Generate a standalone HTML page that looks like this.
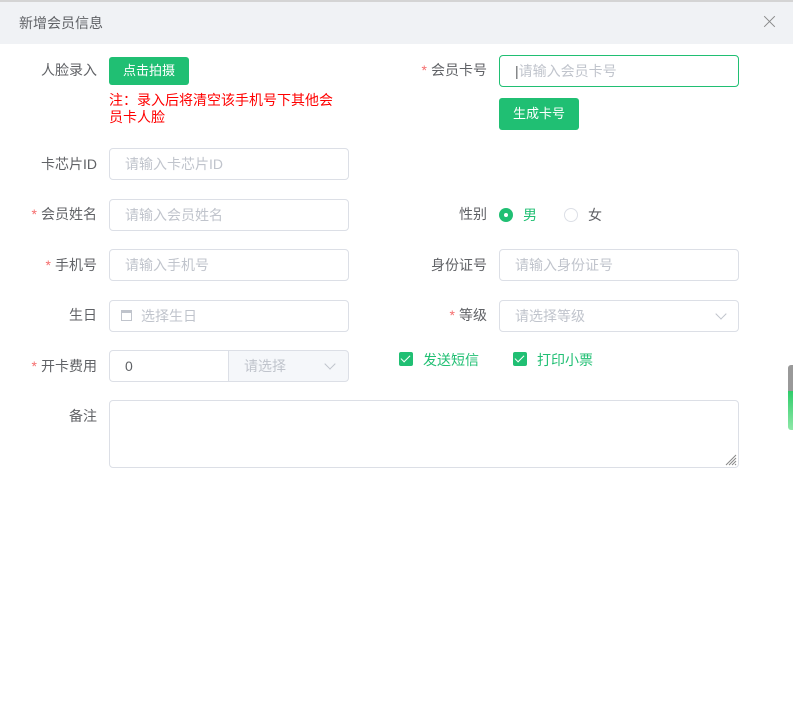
<!DOCTYPE html><html><head><meta charset="utf-8"><style>
*{box-sizing:border-box;margin:0;padding:0}
body{width:793px;height:722px;background:#fff;font-family:"Liberation Sans","Noto Sans CJK SC",sans-serif;font-size:14px;color:#606266;position:relative;overflow:hidden}
.a{position:absolute}
.hd{left:0;top:0;width:793px;height:44px;background:#f0f2f5;border-top:2px solid #d4d4d4}
.lb{position:absolute;text-align:right;width:120px;line-height:32px;color:#606266}
.lb i{color:#f56c6c;font-style:normal;margin-right:4px}
.in{position:absolute;height:32px;border:1px solid #dcdfe6;border-radius:4px;line-height:30px;padding-left:15px;color:#c0c4cc;font-size:14px}
.btn{position:absolute;background:#20bf73;color:#fff;border-radius:3px;text-align:center;font-size:13px}
.cb{position:absolute;width:14px;height:14px;background:#20bf73;border-radius:2px}
.cb:after{content:"";position:absolute;left:4px;top:1px;width:4px;height:8px;border:solid #fff;border-width:0 1.5px 1.5px 0;transform:rotate(45deg)}
.chev{position:absolute;width:8px;height:8px;border:solid #c0c4cc;border-width:0 1px 1px 0;transform:rotate(45deg)}
</style></head><body>
<div class="a hd"></div>
<div class="a" style="left:19px;top:13px;font-size:14px;color:#606266">新增会员信息</div>
<div class="a" style="left:762px;top:21px;width:15px;height:1px;background:#888;transform:rotate(45deg)"></div>
<div class="a" style="left:762px;top:21px;width:15px;height:1px;background:#888;transform:rotate(-45deg)"></div>

<div class="lb" style="left:-23px;top:54px">人脸录入</div>
<div class="btn" style="left:109px;top:57px;width:80px;height:28px;line-height:28px">点击拍摄</div>
<div class="a" style="left:109px;top:92px;color:#f00;font-size:14px;line-height:17px;width:230px">注：录入后将清空该手机号下其他会员卡人脸</div>

<div class="lb" style="left:367px;top:54px"><i>*</i>会员卡号</div>
<div class="in" style="left:499px;top:55px;width:240px;border-color:#20bf73"><span style="color:#606266;font-weight:100">|</span>请输入会员卡号</div>
<div class="btn" style="left:499px;top:98px;width:80px;height:32px;line-height:32px">生成卡号</div>

<div class="lb" style="left:-23px;top:148px">卡芯片ID</div>
<div class="in" style="left:109px;top:148px;width:240px">请输入卡芯片ID</div>

<div class="lb" style="left:-23px;top:198px"><i>*</i>会员姓名</div>
<div class="in" style="left:109px;top:199px;width:240px">请输入会员姓名</div>
<div class="lb" style="left:367px;top:198px">性别</div>
<div class="a" style="left:499px;top:208px;width:14px;height:14px;border-radius:50%;background:#20bf73"><div class="a" style="left:5px;top:5px;width:4px;height:4px;border-radius:50%;background:#fff"></div></div>
<div class="a" style="left:523px;top:205px;color:#20bf73">男</div>
<div class="a" style="left:564px;top:208px;width:14px;height:14px;border-radius:50%;border:1px solid #dcdfe6"></div>
<div class="a" style="left:588px;top:205px;color:#606266">女</div>

<div class="lb" style="left:-23px;top:249px"><i>*</i>手机号</div>
<div class="in" style="left:109px;top:249px;width:240px">请输入手机号</div>
<div class="lb" style="left:367px;top:249px">身份证号</div>
<div class="in" style="left:499px;top:249px;width:240px">请输入身份证号</div>

<div class="lb" style="left:-23px;top:299px">生日</div>
<div class="in" style="left:109px;top:300px;width:240px;padding-left:31px">选择生日</div>
<div class="a" style="left:121px;top:310px;width:11px;height:11px;border:1px solid #c0c4cc;border-top-width:3px"></div>
<div class="lb" style="left:367px;top:299px"><i>*</i>等级</div>
<div class="in" style="left:499px;top:300px;width:240px">请选择等级</div>
<div class="chev" style="left:717px;top:310px"></div>

<div class="lb" style="left:-23px;top:350px"><i>*</i>开卡费用</div>
<div class="in" style="left:109px;top:350px;width:120px;color:#606266;border-radius:4px 0 0 4px">0</div>
<div class="in" style="left:228px;top:350px;width:121px;background:#f5f7fa;border-radius:0 4px 4px 0">请选择</div>
<div class="chev" style="left:326px;top:360px"></div>
<div class="cb" style="left:399px;top:352px"></div>
<div class="a" style="left:423px;top:350px;color:#20bf73">发送短信</div>
<div class="cb" style="left:513px;top:352px"></div>
<div class="a" style="left:537px;top:350px;color:#20bf73">打印小票</div>

<div class="lb" style="left:-23px;top:400px">备注</div>
<div class="in" style="left:109px;top:400px;width:630px;height:68px"></div>
<svg class="a" style="left:724px;top:453px" width="13" height="13"><path d="M12 2L2 12M12 5L5 12M12 8L8 12M12 11L11 12" stroke="#888" stroke-width="1"/></svg>
<div class="a" style="left:788px;top:365px;width:6px;height:65px;border-radius:3px 0 0 3px;background:linear-gradient(#999 0,#999 40%,#2fcc6a 40%,#8fe8a8 100%)"></div>
</body></html>
